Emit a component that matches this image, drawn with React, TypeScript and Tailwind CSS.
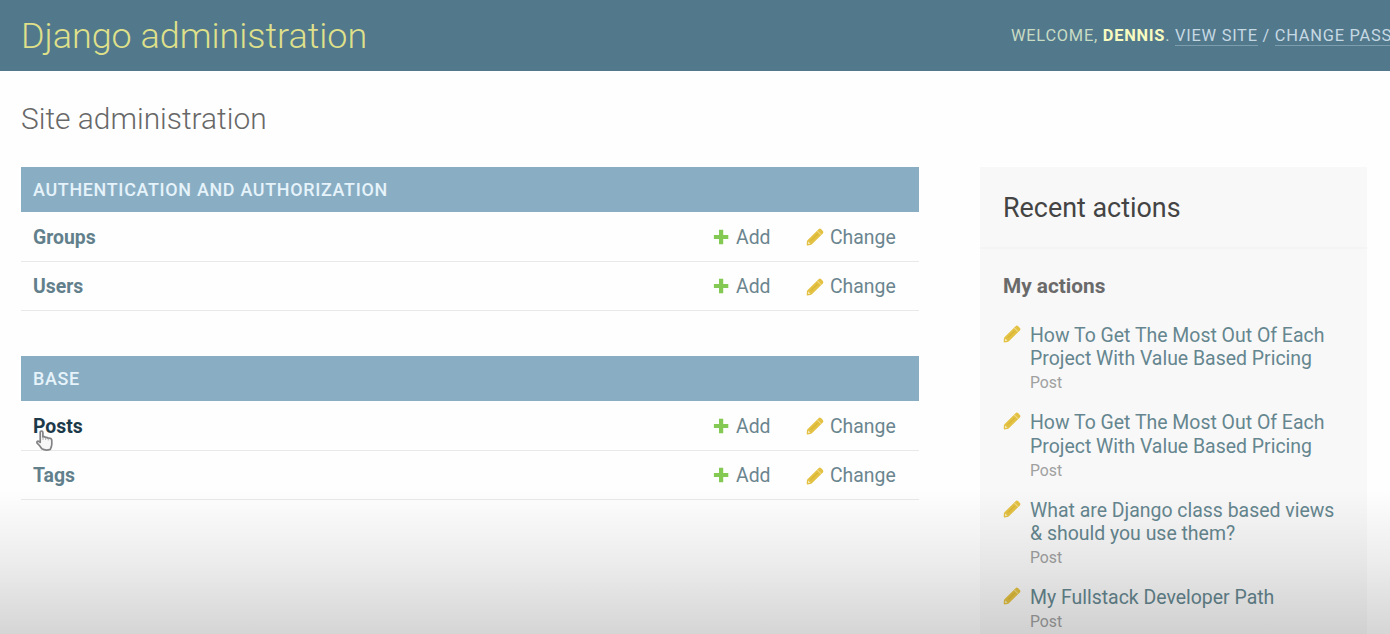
import React from "react";

const PlusIcon = () => (
  <svg className="mb-[1px] h-[16px] w-[16px] shrink-0" viewBox="0 0 16 16">
    <path d="M6 0.8h4.2v5.1h5.1v4.2h-5.1v5.1H6v-5.1H0.9V5.9H6z" fill="#84c953" />
  </svg>
);

const PencilIcon = () => (
  <svg className="h-[18px] w-[18px] shrink-0" viewBox="0 0 18 18">
    <path
      d="M12.6 1.2 Q13.8 0.1 15 1.1 L16.9 3 Q17.9 4.2 16.9 5.4 L5.9 16.3 Q5.2 17 4.3 17.1 L1.6 17.4 Q0.6 17.5 0.7 16.4 L0.9 13.8 Q1 12.8 1.7 12.1 Z"
      fill="#e3c142"
    />
    <path d="M11.4 3 L15.2 6.8" stroke="#f3e3a4" strokeWidth="1" />
    <path d="M2.2 13.6 L4.5 15.8 L2.3 16.1 L1.9 15.7 Z" fill="#f6eac0" />
    <path d="M11.8 5.8 L5 12.6" stroke="#d2ab2c" strokeWidth="0.9" />
  </svg>
);

const HandCursor = () => (
  <svg className="absolute left-[3px] top-[5px] h-[21px] w-[18px]" viewBox="0 0 18 21">
    <path
      d="M4.2 2.3 Q4.2 1 5.5 1 Q6.9 1 6.9 2.4 V7 Q8.6 6.3 9.4 7.5 Q11 6.9 12 8.2 Q15.6 7.7 15.8 10.6 V14.2 Q15.7 16.4 14.3 19.4 Q9.6 20.9 5.8 18.8 Q3.7 15.4 1.1 13.2 Q0.4 11.5 2 11.1 Q3.1 11.1 4.2 12.4 Z"
      fill="#f7f7f7"
      stroke="#838386"
      strokeWidth="1.7"
      strokeLinejoin="round"
    />
    <path d="M7 7.2v2.8M9.7 7.8v2.2M12.3 8.4v2" stroke="#aaaaad" strokeWidth="0.9" />
  </svg>
);

type RowProps = { name: string; active?: boolean };

const Row = ({ name, active }: RowProps) => (
  <div className="flex h-[49.5px] items-center border-b border-[#e9e9e9] pl-[12px] pt-[2px] text-[19.4px] text-[#6b858f]">
    <span className={active ? "relative font-bold text-[#1c3a49]" : "font-bold text-[#62808c]"}>
      {name}
      {active && (
        <span className="absolute left-0 top-[13px]">
          <HandCursor />
        </span>
      )}
    </span>
    <span className="ml-auto flex w-[93px] items-center gap-[7px]">
      <PlusIcon />
      Add
    </span>
    <span className="flex w-[113px] items-center gap-[6px]">
      <PencilIcon />
      Change
    </span>
  </div>
);

const Module = ({ title, rows, active }: { title: string; rows: string[]; active?: string }) => (
  <section>
    <h2 className="flex h-[45px] items-center bg-[#89aec4] pl-[12px] pt-[2px] text-[17.9px] font-medium tracking-[0.7px] text-[#e6f3fa]">
      {title}
    </h2>
    {rows.map((r) => (
      <Row key={r} name={r} active={r === active} />
    ))}
  </section>
);

const actions: string[][] = [
  ["How To Get The Most Out Of Each", "Project With Value Based Pricing"],
  ["How To Get The Most Out Of Each", "Project With Value Based Pricing"],
  ["What are Django class based views", "& should you use them?"],
  ["My Fullstack Developer Path"],
];

export default function App() {
  return (
    <div className="relative h-[634px] w-[1390px] overflow-hidden bg-[#fefefe] font-['Roboto',sans-serif]">
      <header className="flex h-[71px] items-center justify-between bg-[#52788c] pl-[21px]">
        <h1 className="text-[35.9px] font-light leading-[70px] text-[#dfe08a]">Django administration</h1>
        <div className="w-[379px] whitespace-nowrap text-[16.4px] leading-[20px] tracking-[0.75px] text-[#c8dcc4]">
          WELCOME, <strong className="font-bold text-[#f7fbc0]">DENNIS</strong>.{" "}
          <a className="border-b border-[#7d9eae] text-[#c6d9e3]">VIEW SITE</a>
          <span className="text-[#c6d9e3]"> / </span>
          <a className="border-b border-[#7d9eae] text-[#c6d9e3]">CHANGE PASS</a>
        </div>
      </header>

      <div className="flex h-[96px] items-center pl-[21px]">
        <h2 className="pt-[1px] text-[29.9px] font-light text-[#686868]">Site administration</h2>
      </div>

      <main className="flex items-start justify-between pl-[21px] pr-[23px]">
        <div className="flex w-[898px] flex-col gap-[45px]">
          <Module title="AUTHENTICATION AND AUTHORIZATION" rows={["Groups", "Users"]} />
          <Module title="BASE" rows={["Posts", "Tags"]} active="Posts" />
        </div>

        <aside className="h-[520px] w-[387px] bg-[#f8f8f8]">
          <h2 className="flex h-[82px] items-center border-b-2 border-[#f4f4f4] pl-[23px] pt-[2px] text-[26.9px] text-[#444444]">
            Recent actions
          </h2>
          <h3 className="pl-[23px] pt-[25px] text-[20.8px] font-bold leading-[24px] text-[#6a6a6a]">My actions</h3>
          <ul className="flex flex-col gap-[15px] pl-[23px] pt-[25px]">
            {actions.map((lines, i) => (
              <li key={i} className="flex gap-[9px]">
                <span className="pt-[2px]">
                  <PencilIcon />
                </span>
                <div className="pt-[1px] text-[19.45px] leading-[23.2px] text-[#65868f]">
                  {lines.map((l) => (
                    <div key={l} className="whitespace-nowrap">
                      {l}
                    </div>
                  ))}
                  <div className="pt-[1px] text-[15.8px] leading-[24px] text-[#a0a0a0]">Post</div>
                </div>
              </li>
            ))}
          </ul>
        </aside>
      </main>

      <div className="pointer-events-none absolute inset-x-0 bottom-0 h-[144px] bg-linear-to-b from-black/0 via-black/7 to-black/16" />
    </div>
  );
}
